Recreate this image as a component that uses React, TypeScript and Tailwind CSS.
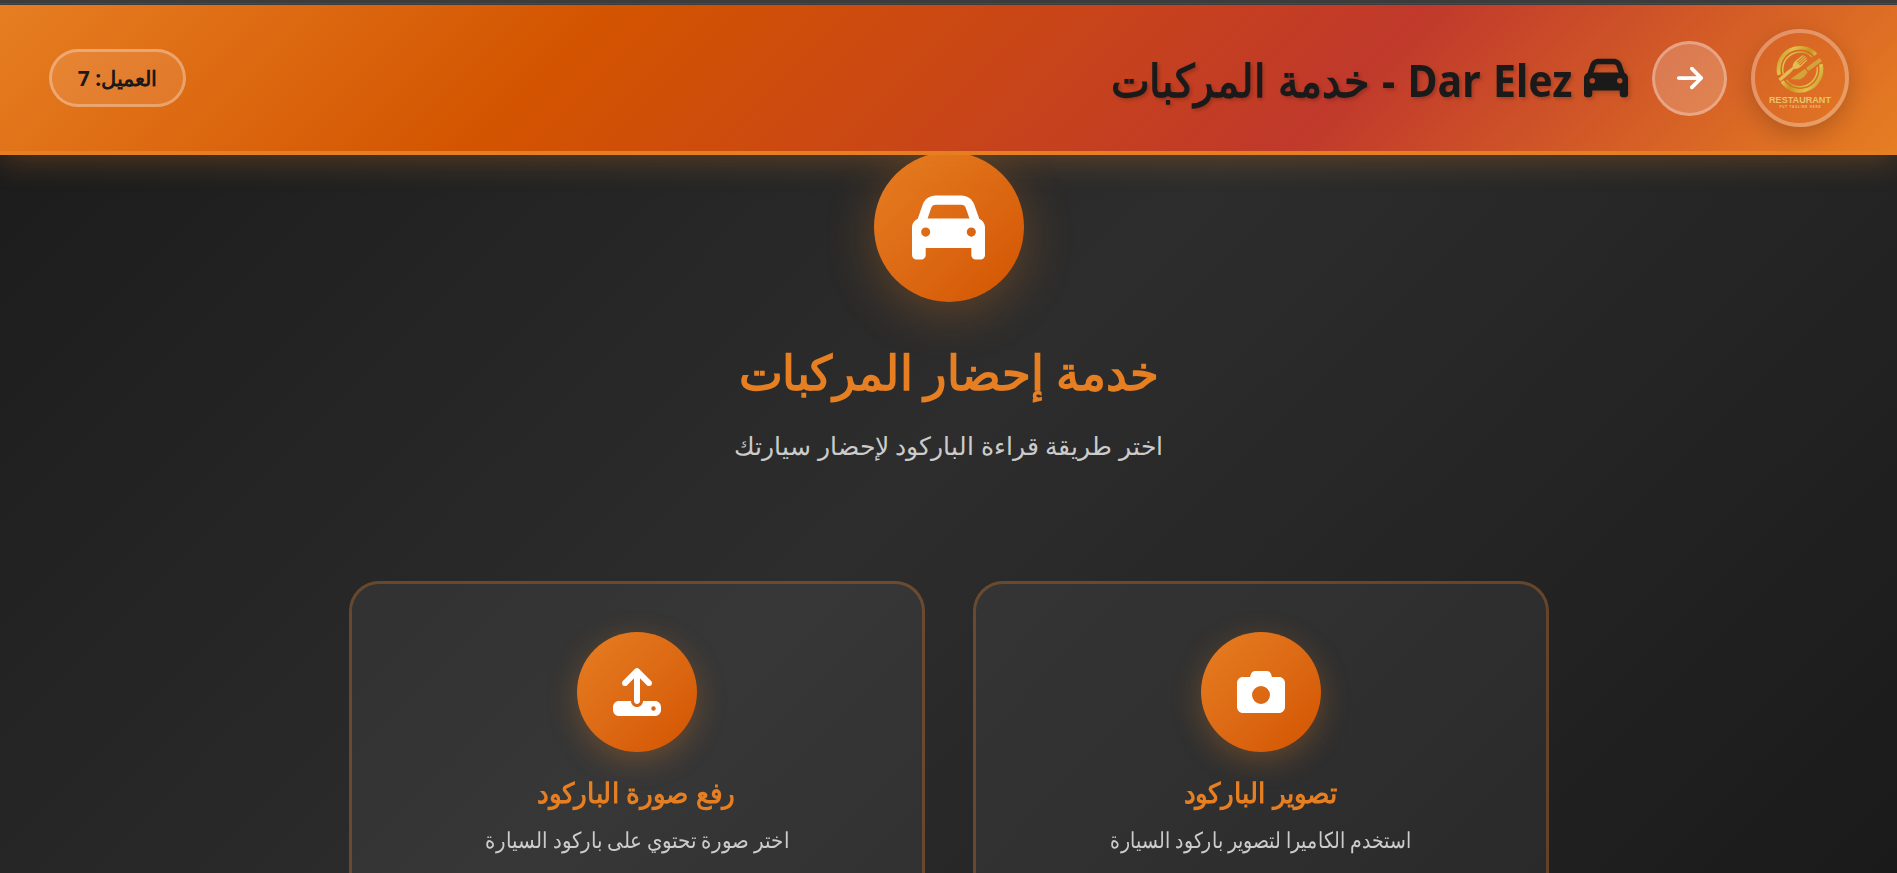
import React from "react";
import { FaArrowRight, FaCamera, FaCar, FaUpload } from "react-icons/fa6";

function RestaurantLogo() {
  return (
    <svg viewBox="0 0 90 90" className="h-[90px] w-[90px]" direction="ltr">
      <defs>
        <linearGradient id="gold" gradientUnits="userSpaceOnUse" x1="22" y1="16" x2="66" y2="60">
          <stop offset="0" stopColor="#d9a928" />
          <stop offset="0.25" stopColor="#f0da78" />
          <stop offset="0.5" stopColor="#c9941f" />
          <stop offset="0.75" stopColor="#e3c04c" />
          <stop offset="1" stopColor="#b98a1c" />
        </linearGradient>
      </defs>
      <g fill="none" stroke="url(#gold)">
        <circle cx="45" cy="36.300" r="21.500" strokeWidth="3.800" pathLength="360" strokeDasharray="152 208" transform="rotate(165 45 36.300)" />
        <circle cx="45" cy="36.300" r="21.500" strokeWidth="3.800" pathLength="360" strokeDasharray="160 200" transform="rotate(-14 45 36.300)" />
        <circle cx="45" cy="36.300" r="17.300" strokeWidth="1.500" pathLength="360" strokeDasharray="150 210" transform="rotate(164 45 36.300)" />
        <circle cx="45" cy="36.300" r="17.300" strokeWidth="1.500" pathLength="360" strokeDasharray="150 210" transform="rotate(-8 45 36.300)" />
      </g>
      <g transform="translate(24.500 47) rotate(-41)" fill="#e2bd50">
        <path d="M0 -1.700H12L18 -1.100Q21 -4 24 -4L34 -3.500V-2.500H25V-1.600H35V-.6H25V.4H35V1.400H25V2.400H34V3.400L24 3.900Q21 3.900 18 1.100L12 1.700H0Z" />
      </g>
      <g transform="translate(65.700 26.700) rotate(144)" fill="#d2a43a">
        <path d="M0 -2H16L17 0L16 2H0Z" />
        <path d="M18 -2.500Q24 -5 29 -3.500L36 2H18Z" />
      </g>
      <text x="45" y="70" textAnchor="middle" textLength="62" lengthAdjust="spacingAndGlyphs" fill="#e8c46a" fontSize="8.600" fontWeight="700" fontFamily="Liberation Sans, sans-serif">
        RESTAURANT
      </text>
      <text x="45" y="74.500" textAnchor="middle" textLength="41" lengthAdjust="spacing" fill="#eec27a" fontSize="3" fontWeight="700" fontFamily="Liberation Sans, sans-serif">
        PUT TAGLINE HERE
      </text>
    </svg>
  );
}

function Header() {
  return (
    <header className="relative z-10 flex h-[150px] items-center justify-between border-b-4 border-[#e67e22] bg-[linear-gradient(135deg,#e67e22_0%,#d35400_30%,#c0392b_70%,#e67e22_100%)] pr-12 pl-[49px] shadow-[0_4px_30px_rgba(230,126,34,0.3)]">
      <div className="flex items-center gap-6">
        <div className="flex size-[98px] items-center justify-center rounded-full border-4 border-white/30 shadow-[0_8px_25px_rgba(0,0,0,0.2)]">
          <RestaurantLogo />
        </div>
        <button className="flex size-[75px] items-center justify-center rounded-full border-[3px] border-white/30 bg-white/20 text-white">
          <FaArrowRight className="size-[30px]" />
        </button>
        <h1 className="flex items-center gap-3 text-[44.8px] leading-[60px] font-bold whitespace-nowrap text-[#1a1a1a] [text-shadow:2px_2px_4px_rgba(0,0,0,0.2)]">
          <FaCar className="size-[44px] shrink-0 drop-shadow-[2px_2px_2px_rgba(0,0,0,0.2)]" />
          <span className="w-[460px] pt-1">
            <span className="inline-block origin-right scale-x-[0.915] [word-spacing:2px]">Dar Elez - خدمة المركبات</span>
          </span>
        </h1>
      </div>
      <div className="flex h-[58px] w-[137px] items-center justify-center rounded-[29px] border-[3px] border-white/30 bg-white/10 pt-0.5 text-[21px] font-bold whitespace-nowrap text-[#1a1a1a]">
        العميل: 7
      </div>
    </header>
  );
}

interface OptionCardProps {
  icon: React.ReactNode;
  title: React.ReactNode;
  text: React.ReactNode;
  textClass: string;
}

function OptionCard({ icon, title, text, textClass }: OptionCardProps) {
  return (
    <section className="flex h-[420px] w-[576px] flex-col items-center rounded-[30px] border-[3px] border-[#e67e22]/30 bg-white/5 pt-12 whitespace-nowrap">
      <div className="flex size-[120px] shrink-0 items-center justify-center rounded-full bg-linear-135 from-[#e67e22] to-[#d35400] text-5xl text-white shadow-[0_8px_30px_rgba(230,126,34,0.3)]">
        {icon}
      </div>
      <h3 className="mt-5 scale-x-[0.94] text-[28px] leading-10 font-bold text-[#e67e22]">{title}</h3>
      <p className={`mt-3 text-[21.500px] leading-8 text-[#cccccc] ${textClass}`}>{text}</p>
    </section>
  );
}

export default function App() {
  return (
    <div dir="rtl" className="flex h-[873px] flex-col overflow-hidden bg-[linear-gradient(135deg,#1a1a1a_0%,#2d2d2d_50%,#1a1a1a_100%)] font-['Noto_Sans',sans-serif]">
      <div className="relative z-20 h-[5px] shrink-0 bg-[linear-gradient(#3c3c3c_0_3px,#484848_3px_4px,#3c3c3c_4px)]" />
      <div className="shrink-0">
        <Header />
      </div>
      <main className="-mt-[3px] flex shrink-0 flex-col items-center">
        <div className="flex size-[150px] items-center justify-center rounded-full bg-linear-135 from-[#e67e22] to-[#d35400] text-[73px] text-white shadow-[0_10px_50px_rgba(230,126,34,0.3)]">
          <FaCar />
        </div>
        <h2 className="mt-[34px] h-[72px] scale-x-[0.97] text-[48px] leading-[72px] font-bold whitespace-nowrap text-[#e67e22]">خدمة إحضار المركبات</h2>
        <p className="mt-[17px] h-10 text-[25.400px] leading-10 whitespace-nowrap text-[#cccccc]">اختر طريقة قراءة الباركود لإحضار سيارتك</p>
        <div className="mt-[116px] flex gap-12">
          <OptionCard
            icon={<FaCamera />}
            title="تصوير الباركود"
            text="استخدم الكاميرا لتصوير باركود السيارة"
            textClass="scale-x-[0.86]"
          />
          <OptionCard
            icon={<FaUpload />}
            title="رفع صورة الباركود"
            text="اختر صورة تحتوي على باركود السيارة"
            textClass="scale-x-[0.9]"
          />
        </div>
      </main>
    </div>
  );
}
